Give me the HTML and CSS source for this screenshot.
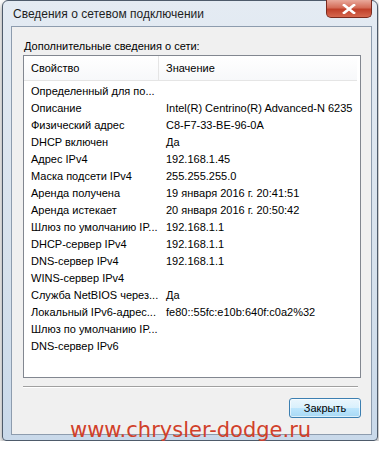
FILE: index.html
```html
<!DOCTYPE html>
<html lang="ru">
<head>
    <meta charset="UTF-8">
    <title>Сведения о сетевом подключении</title>
    <link rel="stylesheet" href="styles.css">
</head>
<body>
    <div class="window">
        <div class="titlebar">
            <span class="title">Сведения о сетевом подключении</span>
            <div class="close-btn">
                <svg width="14" height="10" viewBox="0 0 14 10">
                    <path d="M2 1 L12 9 M12 1 L2 9" stroke="#fff" stroke-width="2.6" stroke-linecap="square"/>
                </svg>
            </div>
        </div>

        <div class="client">
            <div class="caption">Дополнительные сведения о сети:</div>

            <div class="listview">
                <div class="lv-header">
                    <div class="col-prop">Свойство</div>
                    <div class="col-val">Значение</div>
                </div>
                <div class="lv-body">
                    <div class="row"><div class="col-prop">Определенный для по...</div><div class="col-val"></div></div>
                    <div class="row"><div class="col-prop">Описание</div><div class="col-val">Intel(R) Centrino(R) Advanced-N 6235</div></div>
                    <div class="row"><div class="col-prop">Физический адрес</div><div class="col-val">C8-F7-33-BE-96-0A</div></div>
                    <div class="row"><div class="col-prop">DHCP включен</div><div class="col-val">Да</div></div>
                    <div class="row"><div class="col-prop">Адрес IPv4</div><div class="col-val">192.168.1.45</div></div>
                    <div class="row"><div class="col-prop">Маска подсети IPv4</div><div class="col-val">255.255.255.0</div></div>
                    <div class="row"><div class="col-prop">Аренда получена</div><div class="col-val">19 января 2016 г. 20:41:51</div></div>
                    <div class="row"><div class="col-prop">Аренда истекает</div><div class="col-val">20 января 2016 г. 20:50:42</div></div>
                    <div class="row"><div class="col-prop">Шлюз по умолчанию IP...</div><div class="col-val">192.168.1.1</div></div>
                    <div class="row"><div class="col-prop">DHCP-сервер IPv4</div><div class="col-val">192.168.1.1</div></div>
                    <div class="row"><div class="col-prop">DNS-сервер IPv4</div><div class="col-val">192.168.1.1</div></div>
                    <div class="row"><div class="col-prop">WINS-сервер IPv4</div><div class="col-val"></div></div>
                    <div class="row"><div class="col-prop">Служба NetBIOS через...</div><div class="col-val">Да</div></div>
                    <div class="row"><div class="col-prop">Локальный IPv6-адрес...</div><div class="col-val">fe80::55fc:e10b:640f:c0a2%32</div></div>
                    <div class="row"><div class="col-prop">Шлюз по умолчанию IP...</div><div class="col-val"></div></div>
                    <div class="row"><div class="col-prop">DNS-сервер IPv6</div><div class="col-val"></div></div>
                </div>
            </div>

            <div class="separator"></div>

            <div class="buttons">
                <button class="btn">Закрыть</button>
            </div>
        </div>

        <div class="watermark">www.chrysler-dodge.ru</div>
    </div>
</body>
</html>
```

FILE: styles.css
```css
body {
    margin: 0;
    background: #ffffff;
    font-family: "Liberation Sans", Arial, sans-serif;
    font-size: 11px;
    color: #000;
}
.window {
    position: relative;
    margin-left: 2px;
    width: 376px;
    height: 441px;
    box-sizing: border-box;
    border: 1px solid #4e5b6b;
    border-radius: 6px 6px 4px 4px;
    background: linear-gradient(#e4ebf3, #d6e1ec 60%, #c9d9ea);
    padding: 0 5px 5px 8px;
    box-shadow: 0 3px 6px rgba(0,0,0,0.45);
    display: flex;
    flex-direction: column;
}
.titlebar {
    height: 25px;
    display: flex;
    align-items: flex-start;
}
.title {
    margin: 6px 0 0 2px;
    font-size: 12px;
    color: #1e1e1e;
}
.close-btn {
    margin-left: auto;
    margin-top: -1px;
    width: 46px;
    height: 18px;
    box-sizing: border-box;
    border: 1px solid #7a2a1e;
    border-top: none;
    border-radius: 0 0 5px 5px;
    background: linear-gradient(#e9a99c, #d46c58 45%, #c0402a 55%, #d6684f);
    display: flex;
    align-items: center;
    justify-content: center;
}
.client {
    flex: 1;
    border: 1px solid #8d9cae;
    background: #f0f0f0;
    padding: 12px 10px 0 11px;
    display: flex;
    flex-direction: column;
}
.caption {
    padding-left: 1px;
    height: 16px;
    line-height: 14px;
}
.listview {
    height: 323px;
    box-sizing: border-box;
    border: 1px solid #828790;
    background: #fff;
}
.lv-header {
    display: flex;
    height: 24px;
    align-items: center;
    border-bottom: 1px solid #e5e5e5;
    margin-right: 3px;
    background: linear-gradient(#ffffff, #f7f8fa);
}
.col-prop {
    flex-shrink: 0;
    width: 127px;
    padding-left: 7px;
    white-space: nowrap;
    overflow: hidden;
}
.col-val {
    flex: 1;
    padding-left: 7px;
    white-space: nowrap;
}
.lv-header .col-prop {
    border-right: 1px solid #e5e5e5;
    height: 24px;
    line-height: 24px;
}
.lv-body {
    padding-top: 2px;
}
.row {
    display: flex;
    height: 17px;
    line-height: 17px;
}
.row .col-prop {
    width: 128px;
}
.separator {
    margin-top: 8px;
    margin-right: 3px;
    border-top: 1px solid #a0a0a0;
    border-bottom: 1px solid #ffffff;
}
.buttons {
    display: flex;
    justify-content: flex-end;
    margin-top: 10px;
}
.btn {
    width: 72px;
    height: 20px;
    font-family: inherit;
    font-size: 11px;
    color: #000;
    border: 1px solid #3c7fb1;
    border-radius: 3px;
    background: linear-gradient(#eaf6fd, #d9f0fc 50%, #bee6fd 50%, #a7d9f5);
    box-shadow: inset 0 0 0 1px rgba(255,255,255,0.6);
    padding: 0;
}
.watermark {
    position: absolute;
    left: 67px;
    top: 417px;
    font-family: "DejaVu Sans", sans-serif;
    font-size: 21px;
    color: #d0402a;
    white-space: nowrap;
}
```
